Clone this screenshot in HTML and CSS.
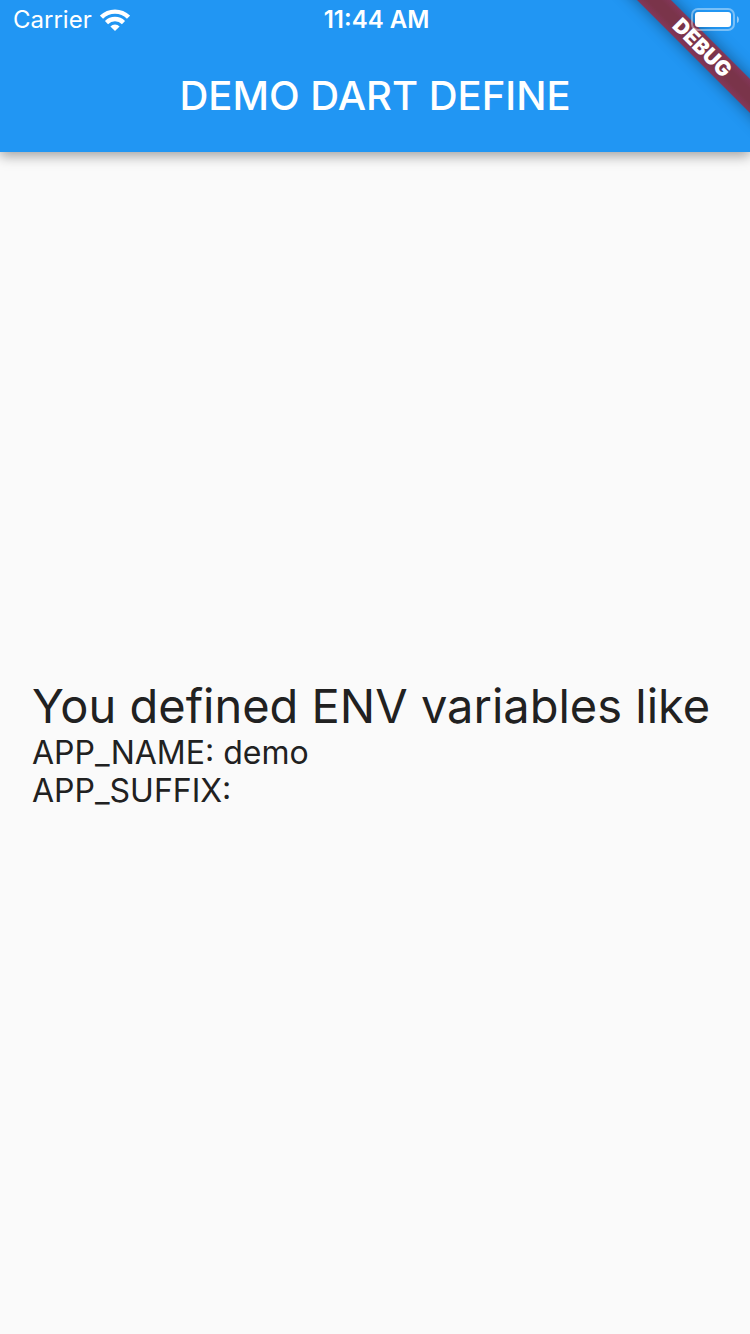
FILE: index.html
```html
<!DOCTYPE html>
<html lang="en">
<head>
<meta charset="utf-8">
<meta name="viewport" content="width=device-width, initial-scale=1">
<title>DEMO DART DEFINE</title>
<link rel="stylesheet" href="styles.css">
</head>
<body>
<div class="app">
  <header class="app-bar">
    <div class="status-bar">
      <div class="status-left">
        <span>Carrier</span>
        <svg class="wifi" width="30" height="22" viewBox="0 0 30 22" aria-label="Wi-Fi">
          <g fill="none" stroke="#fff" stroke-width="4.400">
            <path d="M1.500 8.200a19.200 19.200 0 0 1 27 0"/>
            <path d="M6.500 13.600a12 12 0 0 1 17 0"/>
          </g>
          <path fill="#fff" d="M10.400 17.400a6.600 6.600 0 0 1 9.200 0L15 22z"/>
        </svg>
      </div>
      <time class="clock">11:44 AM</time>
      <div class="status-right">
        <svg class="battery" width="49" height="24" viewBox="0 0 49 24" aria-label="Battery full">
          <rect x="1" y="1" width="42" height="21" rx="6" fill="none" stroke="#fff" stroke-opacity=".4" stroke-width="2"/>
          <rect x="4" y="4" width="36" height="15" rx="3" fill="#fff"/>
          <path fill="#fff" fill-opacity=".5" d="M46 8q2 1 2 3.500t-2 3.500z"/>
        </svg>
      </div>
    </div>
    <h1 class="title">DEMO DART DEFINE</h1>
  </header>
  <main class="content">
    <div class="variables">
      <h2 class="heading">You defined ENV variables like</h2>
      <p class="variable">APP_NAME: demo</p>
      <p class="variable">APP_SUFFIX:</p>
    </div>
  </main>
  <div class="banner-corner"><div class="banner">DEBUG</div></div>
</div>
</body>
</html>
```
FILE: styles.css
```css
* {
  box-sizing: border-box;
}

body {
  margin: 0;
  font-family: Inter, "Liberation Sans", sans-serif;
  color: #212121;
  background: #fafafa;
}

.app {
  position: relative;
  display: flex;
  flex-direction: column;
  min-height: 100vh;
}

.app-bar {
  color: #fff;
  background: #2196f3;
  box-shadow: 0 4px 12px rgba(0, 0, 0, 0.36);
}

.status-bar {
  position: relative;
  z-index: 2;
  display: grid;
  grid-template-columns: 1fr auto 1fr;
  align-items: center;
  height: 40px;
  padding: 0 10px 0 13px;
  font-size: 24px;
  line-height: 40px;
}

.status-left {
  display: flex;
  align-items: center;
  gap: 8px;
}

.status-right {
  display: flex;
  justify-content: flex-end;
}

.clock {
  font-weight: 600;
}

.title {
  margin: 0;
  font-size: 40px;
  font-weight: 500;
  line-height: 112px;
  text-align: center;
}

.content {
  display: flex;
  flex: 1;
  flex-direction: column;
  justify-content: center;
  padding: 0 32px;
}

.heading {
  margin: 0;
  font-size: 47px;
  font-weight: 400;
  line-height: 57px;
}

.variable {
  margin: 0;
  font-size: 32px;
  line-height: 38px;
}

.banner-corner {
  position: absolute;
  top: 0;
  right: 0;
  z-index: 1;
  width: 160px;
  height: 160px;
  overflow: hidden;
}

.banner {
  position: absolute;
  top: 36px;
  left: -8px;
  width: 240px;
  height: 24px;
  color: #fff;
  font-size: 21px;
  font-weight: 900;
  line-height: 24px;
  text-align: center;
  background: linear-gradient(#83375a, #7a344a 30%, #7a344a 70%, #83375a);
  box-shadow: 0 0 16px rgba(0, 0, 0, 0.4);
  transform: rotate(45deg);
}
```
